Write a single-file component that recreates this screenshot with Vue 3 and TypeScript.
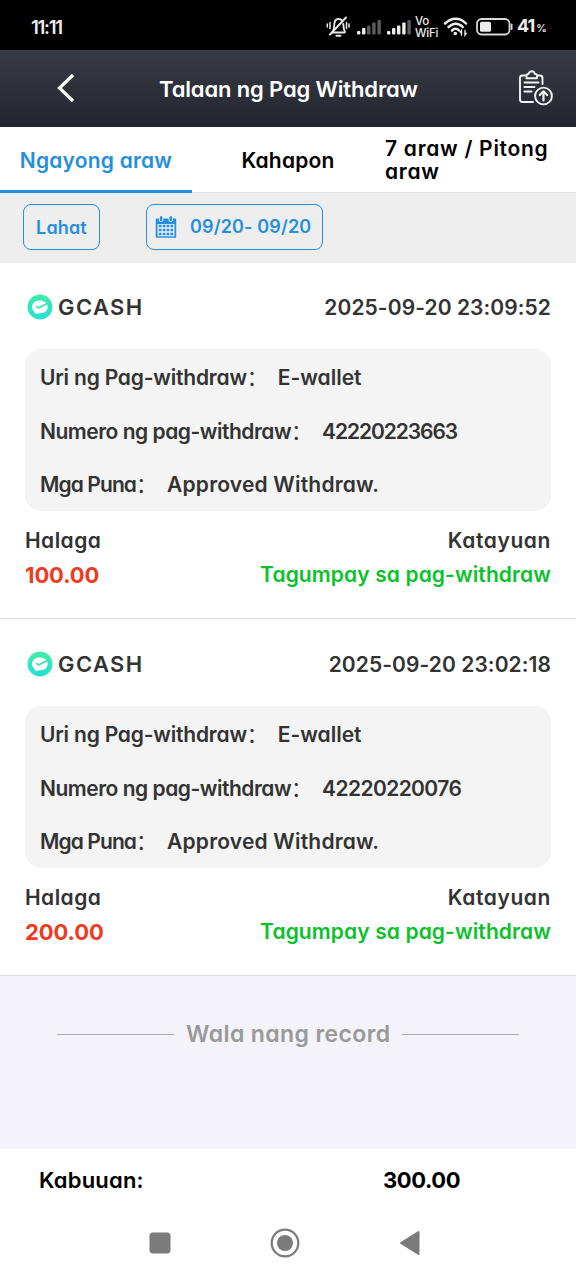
<script setup lang="ts">
interface WithdrawRecord {
  wallet: string
  time: string
  kind: string
  number: string
  numberClass: string
  remark: string
  amount: string
  status: string
}

const records: WithdrawRecord[] = [
  {
    wallet: 'GCASH',
    time: '2025-09-20 23:09:52',
    kind: 'E-wallet',
    number: '42220223663',
    numberClass: 'tight',
    remark: 'Approved Withdraw.',
    amount: '100.00',
    status: 'Tagumpay sa pag-withdraw',
  },
  {
    wallet: 'GCASH',
    time: '2025-09-20 23:02:18',
    kind: 'E-wallet',
    number: '42220220076',
    numberClass: 'snug',
    remark: 'Approved Withdraw.',
    amount: '200.00',
    status: 'Tagumpay sa pag-withdraw',
  },
]
</script>

<template>
  <div class="screen">
    <div class="status-bar">
      <span class="clock">11:11</span>
      <div class="status-icons">
        <svg class="bell" width="24" height="22" viewBox="0 0 24 22" fill="none" stroke="#e8e8e8" stroke-width="1.900" stroke-linecap="round">
          <path d="M6 16.500h12.500M7 15c1-1.300 1.200-3 1.200-5.500C8.200 5.500 9.500 3 12.500 3c1.200 0 2.200.4 3 1M17.300 8c.2 3.500.2 5.500 1.700 8" />
          <path d="M20 1.500 4 18.500" />
          <path d="M10.500 19.800h4" stroke-width="2" />
          <path d="M4 6.500v6M1.300 8v3M20.500 6.500v6M23 8v3" stroke-width="1.500" />
        </svg>
        <svg class="signal" width="24" height="16" viewBox="0 0 24 16">
          <g fill="#ededed">
            <rect x="0" y="12" width="3.400" height="3.500" rx="1" />
            <rect x="5" y="9" width="3.400" height="6.500" rx="1" />
          </g>
          <g fill="#5c5c5c">
            <rect x="10" y="6.500" width="3.400" height="9" rx="1" />
            <rect x="15.200" y="3.500" width="3.400" height="12" rx="1" />
            <rect x="20.400" y="1" width="3.400" height="14.500" rx="1" />
          </g>
        </svg>
        <svg class="signal second" width="24" height="16" viewBox="0 0 24 16">
          <g fill="#ededed">
            <rect x="0" y="12" width="3.400" height="3.500" rx="1" />
            <rect x="5" y="9" width="3.400" height="6.500" rx="1" />
            <rect x="10" y="6.500" width="3.400" height="9" rx="1" />
            <rect x="15.200" y="3.500" width="3.400" height="12" rx="1" />
          </g>
          <rect x="20.400" y="1" width="3.400" height="14.500" rx="1" fill="#5c5c5c" />
        </svg>
        <span class="vowifi"><span>Vo</span><span>WiFi</span></span>
        <svg class="wifi" width="26" height="20" viewBox="0 0 26 20" fill="none" stroke="#ededed" stroke-width="2.500" stroke-linecap="round">
          <path d="M2 6.500C8.500 0 17 0 23 6.500M5.500 10.200c4.500-4.500 10-4.500 14.200-.2M9 13.500c2.200-2.200 5-2.200 7 0" />
          <circle cx="12.300" cy="16.500" r="1.800" fill="#ededed" stroke="none" />
          <path d="M18.500 18v-4.500l-1.300 1.800M22 13.500V18l1.300-1.800" stroke-width="1.400" />
        </svg>
        <svg class="battery" width="38" height="18" viewBox="0 0 38 18">
          <rect x="1" y="1" width="32.500" height="15.500" rx="4.500" fill="none" stroke="#d8d8d8" stroke-width="1.800" />
          <rect x="4" y="3.800" width="11" height="10" rx="1.500" fill="#ededed" />
          <path d="M35.600 6.500v4.500" stroke="#d8d8d8" stroke-width="1.800" stroke-linecap="round" />
        </svg>
        <span class="percent">41<small>%</small></span>
      </div>
    </div>

    <header class="header">
      <svg class="back" width="20" height="30" viewBox="0 0 20 30" fill="none" stroke="#fff" stroke-width="3.200">
        <path d="M17 2 3.500 15 17 28" />
      </svg>
      <h1 class="title">Talaan ng Pag Withdraw</h1>
      <svg class="report" width="36" height="36" viewBox="0 0 36 36" fill="none" stroke="#f4f4f6" stroke-width="1.900" stroke-linecap="round" stroke-linejoin="round">
        <path d="M7.500 5.500H4.500C3 5.500 2 6.500 2 8v21.500C2 31 3 32 4.500 32H15M19.500 5.500h2.500c1.500 0 2.500 1 2.500 2.500v6" />
        <path d="M8.500 8.200V5.800c0-1 1-1.800 2-1.800.7-2 1.600-2.800 3.200-2.800s2.600.8 3.300 2.800c1 0 2 .8 2 1.800v2.400z" />
        <path d="M6.500 12.500h14M6.500 17h10M6.500 21.500h7" stroke-width="2" />
        <circle cx="25.500" cy="26" r="8.400" />
        <path d="M25.500 30.500v-8.500M21.800 25l3.700-3.700 3.700 3.700" stroke-width="2.200" />
      </svg>
    </header>

    <nav class="tabs">
      <div class="tab active">Ngayong araw</div>
      <div class="tab">Kahapon</div>
      <div class="tab week">7 araw / Pitong araw</div>
    </nav>

    <div class="filters">
      <div class="chip all">Lahat</div>
      <div class="chip range">
        <svg width="22" height="24" viewBox="0 0 22 24">
          <path d="M2 3.500h18c.8 0 1.200.5 1.200 1.200v16.800c0 .8-.5 1.300-1.200 1.300H2c-.8 0-1.300-.5-1.300-1.300V4.700c0-.7.5-1.200 1.300-1.200z" fill="#258fdd" />
          <rect x="2.500" y="9" width="17" height="12.300" fill="#eaf3fb" />
          <path d="M3.800 11h14.400M3.800 15h14.400M3.800 19h14.400" stroke="#258fdd" stroke-width="2.400" stroke-dasharray="2.700 1.200" />
          <g fill="#258fdd" stroke="#efefef" stroke-width="1">
            <rect x="4.300" y=".7" width="3.600" height="5.800" rx="1.600" />
            <rect x="14" y=".7" width="3.600" height="5.800" rx="1.600" />
          </g>
        </svg>
        <span>09/20- 09/20</span>
      </div>
    </div>

    <section v-for="record in records" :key="record.number" class="record">
      <div class="record-head">
        <svg class="coin" width="26" height="26" viewBox="0 0 26 26">
          <defs>
            <linearGradient id="mint" x1="0" y1="0" x2="0" y2="1">
              <stop offset="0" stop-color="#42edaa" />
              <stop offset="1" stop-color="#22dfd3" />
            </linearGradient>
          </defs>
          <circle cx="13" cy="13" r="12.500" fill="url(#mint)" />
          <path d="M5 13c0-4 3.300-6.600 7.700-6.600 4.500 0 8 2.700 8 6.300 0 3.700-3 6.500-7.700 6.500-1.300 0-2.200.6-4 .5-1.200 0-1-.9-1.600-2C6 16.500 5 15 5 13z" fill="#fff" />
          <path d="m9.300 12 2 2 9-4.500" fill="none" stroke="#35e2bd" stroke-width="1.600" />
        </svg>
        <span class="wallet">{{ record.wallet }}</span>
        <span class="time">{{ record.time }}</span>
      </div>
      <div class="details">
        <p><span class="l-kind">Uri ng Pag-withdraw</span><i>：</i><span>{{ record.kind }}</span></p>
        <p><span class="l-number">Numero ng pag-withdraw</span><i>：</i><span :class="record.numberClass">{{ record.number }}</span></p>
        <p><span class="l-remark">Mga Puna</span><i>：</i><span class="v-remark">{{ record.remark }}</span></p>
      </div>
      <div class="summary">
        <span class="s-amount">Halaga</span>
        <span class="s-status">Katayuan</span>
      </div>
      <div class="summary values">
        <span class="amount">{{ record.amount }}</span>
        <span class="status">{{ record.status }}</span>
      </div>
    </section>

    <div class="list-end">
      <span class="rule"></span>
      <span class="end-text">Wala nang record</span>
      <span class="rule"></span>
    </div>

    <footer class="total">
      <span class="total-label">Kabuuan:</span>
      <span class="total-value">300.00</span>
    </footer>

    <div class="system-nav">
      <svg width="22" height="22" viewBox="0 0 22 22"><rect x=".5" y=".5" width="21" height="21" rx="3.500" fill="#7b7b7b" /></svg>
      <svg width="30" height="30" viewBox="0 0 30 30">
        <circle cx="15" cy="15" r="13.300" fill="none" stroke="#7b7b7b" stroke-width="2.200" />
        <circle cx="15" cy="15" r="8" fill="#7b7b7b" />
      </svg>
      <svg width="22" height="26" viewBox="0 0 22 26"><path d="M2 13 19.500 2v22z" fill="#7b7b7b" stroke="#7b7b7b" stroke-width="2" stroke-linejoin="round" /></svg>
    </div>
  </div>
</template>

<style>
body {
  margin: 0;
  background: #fff;
}
</style>

<style scoped>
.screen {
  width: 576px;
  height: 1280px;
  display: flex;
  flex-direction: column;
  overflow: hidden;
  background: #f3f3f9;
  color: #333;
  font-family: Inter, 'Noto Sans CJK SC', sans-serif;
  font-feature-settings: 'cv11' 1;
  font-size: 21px;
  font-weight: 580;
  line-height: 24px;
  white-space: nowrap;
}

.status-bar {
  height: 50px;
  flex: none;
  display: flex;
  align-items: center;
  justify-content: space-between;
  box-sizing: border-box;
  padding: 4px 30px 0 31px;
  background: #000;
  color: #ededed;
}
.clock {
  font-size: 18.500px;
  font-weight: 600;
  letter-spacing: -1.300px;
}
.status-icons {
  display: flex;
  align-items: center;
}
.signal {
  margin-left: 7px;
}
.signal.second {
  margin-left: 6px;
}
.vowifi {
  display: flex;
  flex-direction: column;
  margin-left: 4px;
  width: 24px;
  font-size: 11.500px;
  font-weight: 500;
  line-height: 12px;
  letter-spacing: -0.200px;
}
.vowifi span {
  height: 12px;
}
.wifi {
  margin-left: 4px;
}
.battery {
  margin-left: 7px;
}
.percent {
  width: 29px;
  margin-left: 3px;
  font-size: 18px;
  font-weight: 700;
  letter-spacing: -1px;
}
.percent small {
  margin-left: 2px;
  font-size: 10.500px;
  font-weight: 600;
}

.header {
  height: 77px;
  flex: none;
  display: flex;
  align-items: center;
  box-sizing: border-box;
  padding: 0 22px 2px 56px;
  background: linear-gradient(#383b44, #232630);
  color: #fff;
}
.title {
  margin: 0 0 0 83px;
  padding-top: 2px;
  flex: 1;
  font-size: 22px;
  font-weight: 600;
  letter-spacing: -0.150px;
}

.tabs {
  height: 66px;
  flex: none;
  display: grid;
  grid-template-columns: repeat(3, 1fr);
  box-sizing: border-box;
  border-bottom: 1px solid #e2e2e2;
  background: #fff;
  color: #000;
  line-height: 23px;
  letter-spacing: 0.200px;
}
.tab {
  display: flex;
  align-items: center;
  justify-content: center;
}
.tab.active {
  height: 60px;
  padding-top: 3px;
  border-bottom: 3px solid #258fdd;
  color: #258fdd;
}
.tab.week {
  justify-content: flex-start;
  padding: 0 16px 0 1px;
  letter-spacing: 0.720px;
  white-space: normal;
}

.filters {
  height: 70px;
  flex: none;
  display: flex;
  align-items: flex-start;
  gap: 46px;
  box-sizing: border-box;
  padding: 11px 23px 0;
  background: #eee;
}
.chip {
  height: 46px;
  display: flex;
  align-items: center;
  box-sizing: border-box;
  border: 1px solid #258fdd;
  border-radius: 8px;
  color: #258fdd;
  font-size: 18px;
  letter-spacing: 0.150px;
}
.all {
  width: 77px;
  justify-content: center;
  padding-top: 2px;
}
.range {
  width: 177px;
  padding-left: 8px;
  gap: 13px;
}

.record {
  height: 356px;
  flex: none;
  box-sizing: border-box;
  padding: 23px 25px 0;
  border-bottom: 1px solid #dedee0;
  background: #fff;
}
.record + .record {
  height: 357px;
  padding-top: 24px;
}
.record-head {
  height: 42px;
  display: flex;
  align-items: center;
}
.coin {
  margin-left: 2px;
}
.wallet {
  margin-left: 5px;
  flex: 1;
  font-size: 22px;
  letter-spacing: 1.400px;
}
.time {
  margin-top: 1px;
  letter-spacing: 0.080px;
}
.details {
  height: 162px;
  display: flex;
  flex-direction: column;
  justify-content: space-between;
  box-sizing: border-box;
  margin: 21px 0 18px;
  padding: 17px 15px 14px;
  border-radius: 16px;
  background: #f4f4f4;
}
.details p {
  margin: 0;
  display: flex;
}
.details i {
  width: 31px;
  font-style: normal;
  font-weight: 400;
}
.l-kind {
  letter-spacing: -0.200px;
}
.l-number {
  letter-spacing: -0.480px;
}
.l-remark {
  letter-spacing: -0.900px;
}
.v-remark {
  letter-spacing: 0.200px;
}
.tight {
  letter-spacing: -1.080px;
}
.snug {
  letter-spacing: -0.600px;
}
.summary {
  display: flex;
  justify-content: space-between;
}
.s-amount {
  letter-spacing: 0.450px;
}
.s-status {
  letter-spacing: 0.600px;
}
.values {
  margin-top: 10px;
}
.amount {
  color: #f03a20;
  font-size: 22px;
  font-weight: 700;
  letter-spacing: -0.100px;
}
.status {
  color: #0cc12c;
  letter-spacing: 0.110px;
}

.list-end {
  flex: 1;
  display: flex;
  align-items: flex-start;
  justify-content: center;
  padding-top: 46px;
  color: #999;
}
.rule {
  width: 117px;
  height: 1px;
  margin-top: 12px;
  background: #aaaaaf;
}
.end-text {
  width: 204px;
  margin: 0 12px;
  font-size: 23px;
  letter-spacing: 0.400px;
}

.total {
  height: 62px;
  flex: none;
  display: flex;
  align-items: center;
  padding-left: 39px;
  background: #fff;
  color: #000;
  font-size: 22px;
}
.total-label {
  width: 344px;
  letter-spacing: 0.200px;
}
.total-value {
  font-weight: 650;
  letter-spacing: -0.400px;
}
.system-nav {
  height: 69px;
  flex: none;
  display: flex;
  justify-content: center;
  align-items: center;
  gap: 99px;
  box-sizing: border-box;
  padding: 0 6px 5px 0;
  background: #fff;
}
</style>
